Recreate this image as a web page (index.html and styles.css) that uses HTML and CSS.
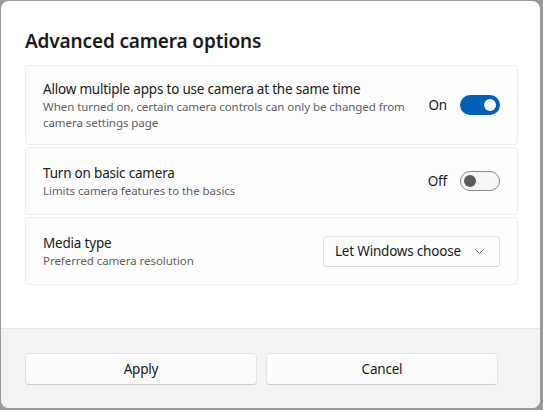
FILE: index.html
```html
<!DOCTYPE html>
<html>
<head>
<meta charset="utf-8">
<link rel="stylesheet" href="styles.css">
</head>
<body>
<div class="dialog">
  <div class="content">
    <h1 class="title">Advanced camera options</h1>
    <div class="cards">
      <div class="card">
        <div class="text">
          <div class="label">Allow multiple apps to use camera at the same time</div>
          <div class="desc">When turned on, certain camera controls can only be changed from camera settings page</div>
        </div>
        <div class="control">
          <span class="state">On</span>
          <span class="toggle on"><span class="knob"></span></span>
        </div>
      </div>
      <div class="card">
        <div class="text">
          <div class="label">Turn on basic camera</div>
          <div class="desc">Limits camera features to the basics</div>
        </div>
        <div class="control">
          <span class="state">Off</span>
          <span class="toggle off"><span class="knob"></span></span>
        </div>
      </div>
      <div class="card">
        <div class="text">
          <div class="label">Media type</div>
          <div class="desc">Preferred camera resolution</div>
        </div>
        <div class="control">
          <div class="combo">
            <span>Let Windows choose</span>
            <svg class="chev" width="9" height="5" viewBox="0 0 9 5"><path d="M0.5 0.5 L4.5 4.5 L8.5 0.5" fill="none" stroke="#6a6a6a" stroke-width="1"/></svg>
          </div>
        </div>
      </div>
    </div>
  </div>
  <div class="footer">
    <button class="btn">Apply</button>
    <button class="btn">Cancel</button>
  </div>
</div>
</body>
</html>
```

FILE: styles.css
```css
html, body {
  margin: 0;
  padding: 0;
}
body {
  background: #9a9a9a;
  width: 543px;
  height: 410px;
  overflow: hidden;
  font-family: "Noto Sans", "Open Sans", sans-serif;
  color: #1b1b1b;
}
.dialog {
  margin: 1px 0 0 1px;
  width: 539px;
  height: 407px;
  background: #ffffff;
  border-radius: 8px;
  overflow: hidden;
  display: flex;
  flex-direction: column;
}
.content {
  flex: 1;
  padding: 26px 22px 0 24px;
}
.title {
  margin: 0 0 10px 0;
  font-size: 19px;
  letter-spacing: -0.15px;
  font-weight: 600;
  line-height: 28px;
  color: #1a1a1a;
}
.cards {
  display: flex;
  flex-direction: column;
  gap: 2px;
}
.card {
  box-sizing: border-box;
  min-height: 68px;
  padding: 13px 17px 13px 17px;
  border: 1px solid #ececec;
  border-radius: 4px;
  background: #fdfdfd;
  display: flex;
  align-items: center;
  justify-content: space-between;
}
.text {
  width: 380px;
}
.label {
  font-size: 13.5px;
  letter-spacing: -0.2px;
  line-height: 20px;
  color: #1a1a1a;
}
.desc {
  font-size: 11.5px;
  letter-spacing: -0.05px;
  line-height: 16px;
  color: #5f5f5f;
}
.control {
  display: flex;
  align-items: center;
}
.state {
  font-size: 13.5px;
  letter-spacing: -0.2px;
  line-height: 20px;
  margin-right: 13px;
  color: #1a1a1a;
}
.toggle {
  box-sizing: border-box;
  width: 40px;
  height: 20px;
  border-radius: 10px;
  display: flex;
  align-items: center;
}
.toggle.on {
  background: #005fb8;
  justify-content: flex-end;
  padding-right: 4px;
}
.toggle.off {
  background: #f6f6f6;
  border: 1px solid #888888;
  padding-left: 3px;
}
.knob {
  width: 12px;
  height: 12px;
  border-radius: 50%;
}
.on .knob { background: #ffffff; }
.off .knob { background: #5c5c5c; }
.combo {
  box-sizing: border-box;
  width: 177px;
  height: 31px;
  border: 1px solid #e5e5e5;
  border-bottom-color: #d6d6d6;
  border-radius: 4px;
  background: #fdfdfd;
  display: flex;
  align-items: center;
  justify-content: space-between;
  padding: 0 15px 0 11px;
  font-size: 13.5px;
  letter-spacing: -0.2px;
  color: #1a1a1a;
}
.footer {
  height: 80px;
  box-sizing: border-box;
  background: #f3f3f3;
  border-top: 1px solid #e5e5e5;
  padding: 24px 42px 0 24px;
  display: flex;
  gap: 9px;
}
.btn {
  flex: 1;
  height: 32px;
  box-sizing: border-box;
  border: 1px solid #e3e3e3;
  border-bottom-color: #cccccc;
  border-radius: 4px;
  background: #fbfbfb;
  font-family: "Noto Sans", "Open Sans", sans-serif;
  font-size: 13.5px;
  letter-spacing: -0.2px;
  color: #1a1a1a;
}
```
